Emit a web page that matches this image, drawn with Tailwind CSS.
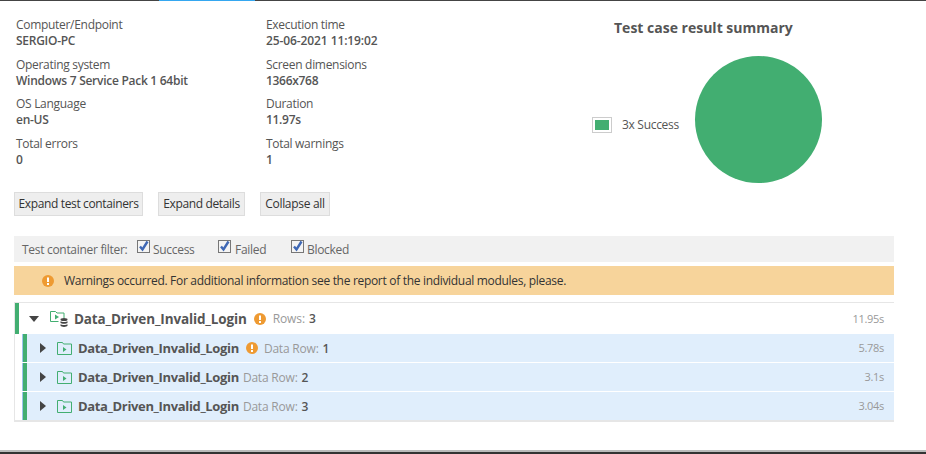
<!doctype html>
<html>
<head>
<meta charset="utf-8">
<script src="https://cdn.jsdelivr.net/npm/@tailwindcss/browser@4"></script>
</head>
<body class="bg-white">
<div class="relative w-[926px] h-[454px] overflow-hidden font-['Open_Sans','Noto_Sans',sans-serif] text-[12px] tracking-[-0.3px] text-[#555]">
  <div class="h-px bg-[#444] flex"><div class="ml-[159px] w-[96px] h-px bg-[#35a7f0]"></div></div>

  <div class="flex h-[190px]">
    <div class="w-[250px] pl-4 pt-[16px] flex flex-col gap-[7.5px] leading-[16px]">
      <div><div>Computer/Endpoint</div><div class="font-semibold tracking-[-0.27px]">SERGIO-PC</div></div>
      <div><div>Operating system</div><div class="font-semibold tracking-[-0.27px]">Windows 7 Service Pack 1 64bit</div></div>
      <div><div>OS Language</div><div class="font-semibold tracking-[-0.27px]">en-US</div></div>
      <div><div>Total errors</div><div class="font-semibold">0</div></div>
    </div>
    <div class="w-[326px] pl-4 pt-[16px] flex flex-col gap-[7.5px] leading-[16px]">
      <div><div>Execution time</div><div class="font-semibold tracking-[-0.1px]">25-06-2021 11:19:02</div></div>
      <div><div>Screen dimensions</div><div class="font-semibold">1366x768</div></div>
      <div><div>Duration</div><div class="font-semibold">11.97s</div></div>
      <div><div>Total warnings</div><div class="font-semibold">1</div></div>
    </div>
    <div class="w-[310px]">
      <div class="ml-[38px] mt-[17px] text-[14px] leading-[20px] font-bold tracking-normal text-[#555]">Test case result summary</div>
      <div class="flex items-start mt-[18px]">
        <div class="ml-[16px] mt-[61px] w-[20px] h-[16px] border border-[#ccc] p-[2px]"><div class="w-full h-full bg-[#42ae71]"></div></div>
        <div class="ml-[10px] mt-[60px] w-[73px] leading-[18px]">3x Success</div>
        <div class="w-[127px] h-[127px] rounded-full bg-[#42ae71]"></div>
      </div>
    </div>
  </div>

  <div class="flex ml-[14px] mt-px gap-[15px] text-[#333] tracking-[-0.36px]">
    <div class="h-6 w-[129px] flex items-center justify-center bg-[#eee] border border-[#ddd]">Expand test containers</div>
    <div class="h-6 w-[87px] flex items-center justify-center bg-[#eee] border border-[#ddd]">Expand details</div>
    <div class="h-6 w-[70px] flex items-center justify-center bg-[#eee] border border-[#ddd] tracking-[-0.3px]">Collapse all</div>
  </div>

  <div class="mx-[14px] w-[880px] mt-5 h-[26px] bg-[#f1f1f1] flex items-center pl-2 pt-[2px] text-[#666]">
    <span class="w-[115px]">Test container filter:</span>
    <span class="flex items-center w-[81px]"><svg class="w-[13px] h-[13px] mr-[3px] -mt-[7px]" viewBox="0 0 13 13"><rect x=".5" y=".5" width="12" height="12" fill="#f4f4f4" stroke="#777"/><path d="M3 6.500l2.500 3L10.500 1.500" fill="none" stroke="#3f68b5" stroke-width="2.400"/></svg>Success</span>
    <span class="flex items-center w-[73px]"><svg class="w-[13px] h-[13px] mr-[4px] -mt-[7px]" viewBox="0 0 13 13"><rect x=".5" y=".5" width="12" height="12" fill="#f4f4f4" stroke="#777"/><path d="M3 6.500l2.500 3L10.500 1.500" fill="none" stroke="#3f68b5" stroke-width="2.400"/></svg>Failed</span>
    <span class="flex items-center"><svg class="w-[13px] h-[13px] mr-[3px] -mt-[7px]" viewBox="0 0 13 13"><rect x=".5" y=".5" width="12" height="12" fill="#f4f4f4" stroke="#777"/><path d="M3 6.500l2.500 3L10.500 1.500" fill="none" stroke="#3f68b5" stroke-width="2.400"/></svg>Blocked</span>
  </div>

  <div class="mx-[14px] w-[880px] mt-1 h-[29px] bg-[#f7d49b] flex items-center pl-[28px] text-[#333]">
    <svg class="w-3 h-3 mr-[10px]" viewBox="0 0 12 12"><circle cx="6" cy="6" r="6" fill="#ee9a32"/><rect x="5" y="2.500" width="2" height="4.500" fill="#fff"/><rect x="5" y="8" width="2" height="2" fill="#fff"/></svg>
    <span class="tracking-[-0.31px]">Warnings occurred. For additional information see the report of the individual modules, please.</span>
  </div>

  <div class="ml-[14px] w-[880px] mt-[7px] border-t border-b-2 border-l border-[#e6e6e6]">
    <div class="h-[31px] border-l-[4px] border-[#42ae71] flex items-center">
      <svg class="ml-[10px] w-[10px] h-[6px]" viewBox="0 0 10 6"><path d="M0 0h10L5 6z" fill="#444"/></svg>
      <svg class="ml-[11px] w-[18px] h-[18px]" viewBox="0 0 18 18"><path d="M.5 1.500h5l1.500 1.500h7v5M.5 1.500v10h8" fill="none" stroke="#42ae71"/><path d="M5 4.500l4 2.500-4 2.500z" fill="#42ae71"/><ellipse cx="14" cy="9.500" rx="3.500" ry="1.500" fill="#444"/><path d="M10.500 11.200c1 1 6 1 7 0v1.800c-1 1-6 1-7 0zM10.500 14.200c1 1 6 1 7 0v1.600c-1 1.500-6 1.500-7 0z" fill="#444"/></svg>
      <span class="ml-[6px] pt-px text-[13.5px] font-bold tracking-[-0.14px]">Data_Driven_Invalid_Login</span>
      <svg class="ml-[7px] w-3 h-3" viewBox="0 0 12 12"><circle cx="6" cy="6" r="6" fill="#ee9a32"/><rect x="5" y="2.500" width="2" height="4.500" fill="#fff"/><rect x="5" y="8" width="2" height="2" fill="#fff"/></svg>
      <span class="ml-[7px] pt-px text-[#999] tracking-[-0.1px]">Rows:</span><span class="ml-[4px] pt-px font-semibold">3</span>
      <span class="ml-auto mr-[10px] pt-px text-[11px] text-[#999]">11.95s</span>
    </div>
    <div class="ml-[7px] flex flex-col gap-px">
      <div class="h-[28px] bg-[#e0eefc] border-l border-[#9cc4ee] flex items-center"><div class="w-[4px] h-full bg-[#42ae71]"></div>
        <svg class="ml-[13px] w-[6px] h-[10px]" viewBox="0 0 6 10"><path d="M0 0v10l6-5z" fill="#444"/></svg>
        <svg class="ml-[11px] w-[15px] h-[14px]" viewBox="0 0 15 14"><path d="M.5 13.500V1.500h5l1 1.500h8v10.500z" fill="none" stroke="#42ae71"/><path d="M6 6l3.500 2.500L6 11z" fill="#42ae71"/></svg>
        <span class="ml-[6px] pt-px text-[13px] font-bold tracking-[-0.35px]">Data_Driven_Invalid_Login</span>
        <svg class="ml-[7px] w-3 h-3" viewBox="0 0 12 12"><circle cx="6" cy="6" r="6" fill="#ee9a32"/><rect x="5" y="2.500" width="2" height="4.500" fill="#fff"/><rect x="5" y="8" width="2" height="2" fill="#fff"/></svg>
        <span class="ml-[6px] pt-px text-[#999] tracking-[-0.2px]">Data Row:</span><span class="ml-[4px] pt-px font-semibold">1</span>
        <span class="ml-auto mr-[10px] pt-px text-[11px] text-[#999]">5.78s</span>
      </div>
      <div class="h-[28px] bg-[#e0eefc] border-l border-[#9cc4ee] flex items-center"><div class="w-[4px] h-full bg-[#42ae71]"></div>
        <svg class="ml-[13px] w-[6px] h-[10px]" viewBox="0 0 6 10"><path d="M0 0v10l6-5z" fill="#444"/></svg>
        <svg class="ml-[11px] w-[15px] h-[14px]" viewBox="0 0 15 14"><path d="M.5 13.500V1.500h5l1 1.500h8v10.500z" fill="none" stroke="#42ae71"/><path d="M6 6l3.500 2.500L6 11z" fill="#42ae71"/></svg>
        <span class="ml-[6px] pt-px text-[13px] font-bold tracking-[-0.35px]">Data_Driven_Invalid_Login</span>
        <span class="ml-[4px] pt-px text-[#999] tracking-[-0.2px]">Data Row:</span><span class="ml-[4px] pt-px font-semibold">2</span>
        <span class="ml-auto mr-[10px] pt-px text-[11px] text-[#999]">3.1s</span>
      </div>
      <div class="h-[28px] bg-[#e0eefc] border-l border-[#9cc4ee] flex items-center"><div class="w-[4px] h-full bg-[#42ae71]"></div>
        <svg class="ml-[13px] w-[6px] h-[10px]" viewBox="0 0 6 10"><path d="M0 0v10l6-5z" fill="#444"/></svg>
        <svg class="ml-[11px] w-[15px] h-[14px]" viewBox="0 0 15 14"><path d="M.5 13.500V1.500h5l1 1.500h8v10.500z" fill="none" stroke="#42ae71"/><path d="M6 6l3.500 2.500L6 11z" fill="#42ae71"/></svg>
        <span class="ml-[6px] pt-px text-[13px] font-bold tracking-[-0.35px]">Data_Driven_Invalid_Login</span>
        <span class="ml-[4px] pt-px text-[#999] tracking-[-0.2px]">Data Row:</span><span class="ml-[4px] pt-px font-semibold">3</span>
        <span class="ml-auto mr-[10px] text-[11px] text-[#999]">3.04s</span>
      </div>
    </div>
  </div>

  <div class="absolute left-0 right-0 top-[450px] h-[2px] bg-[#bbb]"></div>
  <div class="absolute left-0 right-0 top-[452px] h-[2px] bg-[#333]"></div>
</div>
</body>
</html>
